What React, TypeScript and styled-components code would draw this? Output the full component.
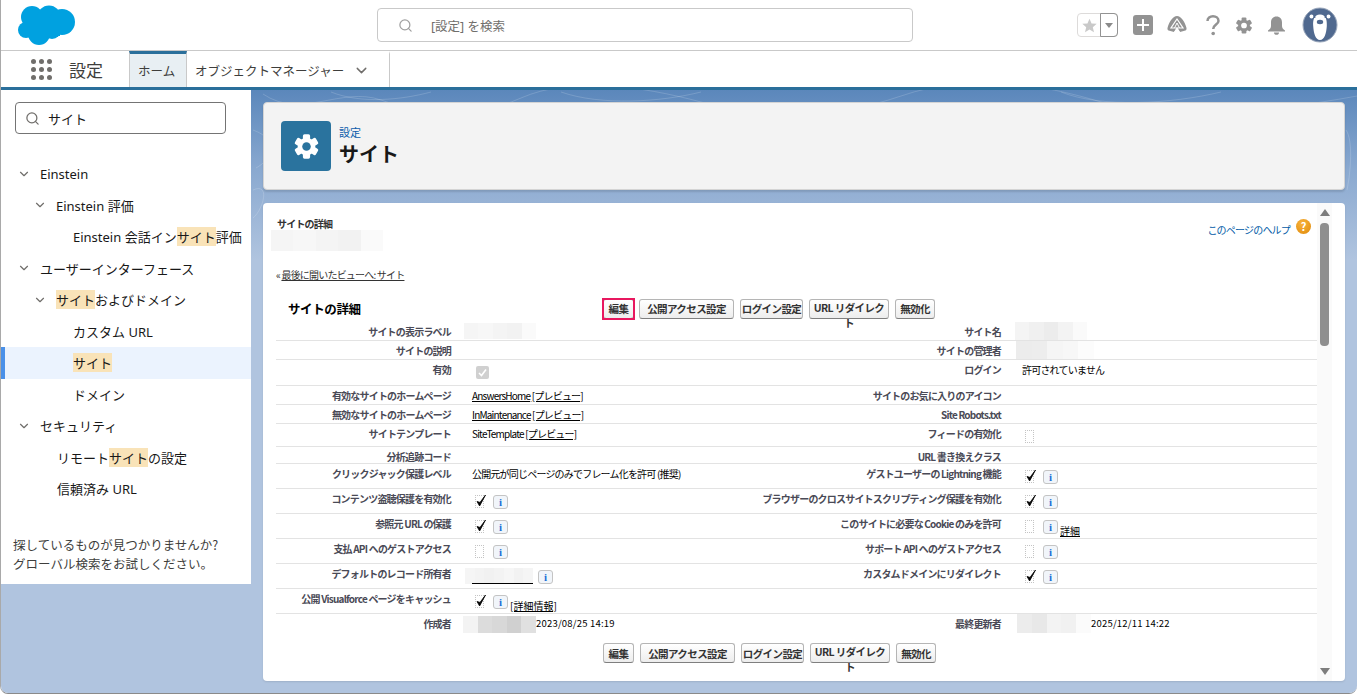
import React from 'react';
import styled, { createGlobalStyle } from 'styled-components';
import { ChevronDown, Search } from 'lucide-react';

const GlobalStyle = createGlobalStyle`
  html, body {
    margin: 0;
    padding: 0;
    background: #fff;
    overflow: hidden;
  }
  * {
    box-sizing: border-box;
  }
`;

const SANS = `"Noto Sans", "Noto Sans CJK JP", sans-serif`;
const CLASSIC = `"Noto Sans CJK JP", "Noto Sans", sans-serif`;

const Page = styled.div`
  width: 1357px;
  height: 694px;
  display: flex;
  flex-direction: column;
  border-left: 1px solid #a9a9a9;
  border-bottom: 1px solid #8a8a8a;
  border-bottom-left-radius: 8px;
  border-bottom-right-radius: 8px;
  overflow: hidden;
  font-family: ${SANS};
  color: #181818;
`;

const TopBar = styled.header`
  height: 51px;
  flex: none;
  position: relative;
  display: flex;
  align-items: center;
  background: #fff;
  border-bottom: 1px solid #c9c9c9;
`;

const Logo = styled.svg`
  position: absolute;
  left: 15px;
  top: 4px;
`;

const GlobalSearch = styled.div`
  position: absolute;
  left: 376px;
  top: 8px;
  width: 536px;
  height: 34px;
  display: flex;
  align-items: center;
  padding-left: 20px;
  gap: 18px;
  border: 1px solid #c9c9c9;
  border-radius: 4px;
  font-size: 12.5px;
  color: #706e6b;
`;

const TopIcons = styled.div`
  margin-left: auto;
  display: flex;
  align-items: center;
  padding-right: 19px;
`;

const Favorites = styled.div`
  width: 41px;
  height: 24px;
  display: flex;
  border: 1px solid #dddbda;
  border-radius: 4px;
  margin-right: 15px;
`;

const FavStar = styled.div`
  width: 22px;
  display: flex;
  align-items: center;
  justify-content: center;
  color: #c9c9c9;
`;

const FavDrop = styled.div`
  flex: 1;
  margin: -1px -1px -1px 0;
  display: flex;
  align-items: center;
  justify-content: center;
  border: 1px solid #939393;
  border-radius: 0 4px 4px 0;
`;

const Caret = styled.span`
  width: 0;
  height: 0;
  border-left: 4px solid transparent;
  border-right: 4px solid transparent;
  border-top: 5px solid #8a8a8a;
`;

const IconSlot = styled.div<{ $w: number; $ml?: number }>`
  width: ${p => p.$w}px;
  margin-left: ${p => p.$ml ?? 0}px;
  display: flex;
  align-items: center;
  justify-content: center;
`;

const NavBar = styled.nav`
  height: 39px;
  flex: none;
  display: flex;
  background: #fff;
  border-bottom: 3px solid #2a6f9b;
`;

const AppLauncher = styled.div`
  width: 128px;
  display: flex;
  align-items: center;
  padding-left: 30px;
  gap: 17px;
`;

const AppName = styled.div`
  font-family: ${CLASSIC};
  font-size: 17px;
  color: #3e3e3c;
`;

const DotsGrid = styled.div`
  display: grid;
  grid-template-columns: repeat(3, 5px);
  grid-auto-rows: 5px;
  gap: 3px;
  span {
    border-radius: 50%;
    background: #706e6b;
  }
`;

const Tab = styled.div<{ $active?: boolean }>`
  display: flex;
  align-items: center;
  gap: 9px;
  padding: 0 ${p => (p.$active ? 8 : 16)}px 0 8px;
  font-family: ${CLASSIC};
  font-size: 12.5px;
  color: #3e3e3c;
  border-right: 1px solid #c9c9c9;
  border-left: ${p => (p.$active ? '1px solid #c9c9c9' : 'none')};
  border-top: 3px solid ${p => (p.$active ? '#2a6f9b' : 'transparent')};
  background: ${p => (p.$active ? '#e8eff3' : '#fff')};
  width: ${p => (p.$active ? 58 : 203)}px;
  white-space: nowrap;
`;

const Body = styled.div`
  flex: 1;
  min-height: 0;
  position: relative;
  display: flex;
  align-items: flex-start;
  gap: 12px;
  background: linear-gradient(to bottom, #5b87bb 0, #8aa9d0 80px, #b0c4df 170px, #b0c4df 100%);
`;

const Contours = styled.svg`
  position: absolute;
  left: 0;
  top: 0;
  pointer-events: none;
`;

const Sidebar = styled.aside`
  width: 250px;
  height: 494px;
  flex: none;
  position: relative;
  background: #fff;
  display: flex;
  flex-direction: column;
`;

const QuickFind = styled.div`
  margin: 12px 0 0 14px;
  width: 211px;
  height: 32px;
  display: flex;
  align-items: center;
  gap: 8px;
  padding-left: 9px;
  border: 1px solid #747474;
  border-radius: 4px;
  font-family: ${CLASSIC};
  font-size: 13px;
  color: #181818;
`;

const Tree = styled.div`
  margin-top: 24px;
  display: flex;
  flex-direction: column;
`;

const TreeRow = styled.div<{ $indent: number; $selected?: boolean }>`
  height: 31.5px;
  display: flex;
  align-items: center;
  padding-left: ${p => p.$indent}px;
  font-size: 13px;
  color: #181818;
  white-space: nowrap;
  background: ${p => (p.$selected ? '#ebf3fe' : 'transparent')};
  box-shadow: ${p => (p.$selected ? 'inset 4px 0 0 #4a90e8' : 'none')};
  svg {
    margin-right: 9px;
    margin-left: -1px;
    color: #706e6b;
    flex: none;
  }
`;

const Mark = styled.mark`
  background: #f9e3b8;
  color: inherit;
`;

const SideHint = styled.div`
  margin-top: 30px;
  padding-left: 12px;
  font-family: ${CLASSIC};
  font-size: 12.5px;
  line-height: 19px;
  color: #3e3e3c;
`;

const Main = styled.main`
  width: 1082px;
  position: relative;
  display: flex;
  flex-direction: column;
  gap: 13px;
  padding-top: 12px;
`;

const PageHeader = styled.section`
  height: 88px;
  display: flex;
  align-items: center;
  gap: 8px;
  padding-left: 17px;
  background: #f3f3f3;
  border: 1px solid #d4d4d4;
  border-radius: 4px;
  box-shadow: 0 2px 2px rgba(0, 0, 0, 0.12);
`;

const HeaderIcon = styled.div`
  width: 50px;
  height: 50px;
  display: flex;
  align-items: center;
  justify-content: center;
  background: #2a739e;
  border-radius: 4px;
`;

const HeaderText = styled.div`
  font-family: ${CLASSIC};
  display: flex;
  flex-direction: column;
`;

const Crumb = styled.div`
  font-size: 11px;
  line-height: 15px;
  color: #0b5cab;
`;

const HeaderTitle = styled.h1`
  margin: 0;
  font-size: 20px;
  line-height: 28px;
  font-weight: 700;
  color: #181818;
`;

const Card = styled.section`
  height: 478px;
  display: flex;
  background: #fff;
  border-radius: 4px;
  padding-right: 13px;
  box-shadow: 0 1px 2px rgba(0, 0, 0, 0.1);
`;

const Classic = styled.div`
  flex: 1;
  min-width: 0;
  display: flex;
  flex-direction: column;
  padding: 0 0 0 13px;
  font-family: ${CLASSIC};
  font-size: 10px;
  letter-spacing: -0.8px;
  color: #000;
`;

const ScrollTrack = styled.div`
  width: 15px;
  display: flex;
  flex-direction: column;
  align-items: center;
  background: #fafafa;
  padding: 6px 0;
`;

const Thumb = styled.div`
  width: 9px;
  height: 123px;
  margin-top: 7px;
  background: #8f8f8f;
  border-radius: 4px;
`;

const ScrollArrow = styled.span<{ $down?: boolean }>`
  width: 0;
  height: 0;
  border-left: 5px solid transparent;
  border-right: 5px solid transparent;
  ${p => (p.$down ? 'border-top: 7px solid #7d7d7d; margin-top: auto;' : 'border-bottom: 7px solid #7d7d7d;')}
`;

const PageTop = styled.div`
  height: 60px;
  display: flex;
  justify-content: space-between;
  padding-top: 15px;
`;

const PageTopLeft = styled.div`
  padding-left: 1px;
`;

const SmallHeading = styled.div`
  font-weight: 700;
  font-size: 10px;
  line-height: 12px;
  color: #333;
`;

const HelpLink = styled.div`
  display: flex;
  align-items: flex-start;
  gap: 6px;
  margin-right: 6px;
  color: #015ba7;
  line-height: 24px;
  height: 24px;
  margin-top: 0;
`;

const HelpDot = styled.span`
  width: 15px;
  height: 15px;
  margin-top: 1px;
  border-radius: 50%;
  background: radial-gradient(circle at 40% 30%, #f7b23b, #e08a0b);
  color: #fff;
  font-size: 11px;
  font-weight: 700;
  line-height: 15px;
  text-align: center;
  letter-spacing: 0;
`;

const BackLink = styled.div`
  height: 12px;
  line-height: 12px;
  color: #333;
  margin-top: 6px;
  a {
    color: #333;
    text-decoration: underline;
  }
`;

const BlockHeader = styled.div`
  display: flex;
  align-items: center;
  margin-top: 14px;
  height: 27px;
`;

const BlockTitle = styled.h2`
  width: 327px;
  margin: 0;
  padding-left: 12px;
  font-size: 12.5px;
  letter-spacing: -0.4px;
  font-weight: 700;
  color: #000;
`;

const ButtonRow = styled.div`
  display: flex;
  align-items: center;
  gap: 6px;
`;

const Highlight = styled.div`
  display: flex;
  outline: 2px solid #e8185f;
  outline-offset: -1px;
  margin-right: -1px;
`;

const ClassicButton = styled.button<{ $w: number }>`
  width: ${p => p.$w}px;
  height: 20px;
  padding: 0;
  font-family: ${CLASSIC};
  font-size: 10.5px;
  letter-spacing: -0.6px;
  font-weight: 700;
  color: #333;
  border: 1px solid #b5b5b5;
  border-bottom-color: #7f7f7f;
  border-radius: 3px;
  background: linear-gradient(to bottom, #fff, #ededed);
`;

const BottomButtons = styled(ButtonRow)`
  margin: 8px 0 0 327px;
`;

const Row = styled.div<{ $h: number; $last?: boolean }>`
  height: ${p => p.$h}px;
  display: grid;
  grid-template-columns: 175px 309px 241px 316px;
  border-bottom: ${p => (p.$last ? 'none' : '1px solid #e3e3e3')};
`;

const Label = styled.div`
  padding-top: 3px;
  line-height: 13px;
  text-align: right;
  font-weight: 700;
  color: #4a4a56;
  white-space: nowrap;
`;

const Value = styled.div`
  padding: 3px 0 0 21px;
  line-height: 13px;
  display: flex;
  align-items: flex-start;
  white-space: nowrap;
  a {
    color: #000;
    text-decoration: underline;
  }
`;

const CheckBox = styled.span`
  width: 9px;
  height: 13px;
  margin: 3px 0 0 3px;
  flex: none;
  position: relative;
  border: 1px dotted #c4c4c4;
  svg {
    position: absolute;
    left: -2px;
    top: -3px;
  }
`;

const DisabledCheck = styled.span`
  width: 13px;
  height: 13px;
  margin: 3px 0 0 4px;
  display: flex;
  align-items: center;
  justify-content: center;
  background: #d0d0d0;
  border-radius: 2px;
`;

const InfoButton = styled.span<{ $ml?: number }>`
  width: 15px;
  height: 14px;
  margin-left: ${p => p.$ml ?? 9}px;
  margin-top: 3px;
  flex: none;
  display: flex;
  align-items: center;
  justify-content: center;
  font-family: "Liberation Serif", serif;
  font-size: 11px;
  font-weight: 700;
  letter-spacing: 0;
  color: #1a6fd6;
  background: #f1f5fa;
  border: 1px solid #c4c4c4;
  border-radius: 3px;
`;

const AfterInfo = styled.a`
  margin: 7px 0 0 2px;
  font-size: 10px;
  letter-spacing: 0;
`;

const Mosaic = styled.div<{ $w: number; $h: number; $ml?: number; $mt?: number }>`
  width: ${p => p.$w}px;
  height: ${p => p.$h}px;
  margin-left: ${p => p.$ml ?? 0}px;
  margin-top: ${p => p.$mt ?? 0}px;
  flex: none;
  display: flex;
  overflow: hidden;
  position: relative;
`;

const MosaicCell = styled.span<{ $shade: string }>`
  flex: 1;
  background: ${p => p.$shade};
`;

const OwnerLine = styled.span`
  position: absolute;
  left: 7px;
  right: 0;
  bottom: 0;
  height: 1px;
  background: #000;
`;

const Stamp = styled.span`
  letter-spacing: 0.2px;
  font-size: 9.5px;
`;

const Gear = ({ size, color, hole }: { size: number; color: string; hole: string }) => (
  <svg width={size} height={size} viewBox="0 0 24 24">
    {[0, 60, 120, 180, 240, 300].map(a => (
      <rect key={a} x="8.8" y="1.2" width="6.4" height="6" rx="1.4" fill={color} transform={`rotate(${a} 12 12)`} />
    ))}
    <circle cx="12" cy="12" r="7.8" fill={color} />
    <circle cx="12" cy="12" r="3.8" fill={hole} />
  </svg>
);

const Check = () => (
  <svg width="14" height="15" viewBox="0 0 14 15">
    <path d="M3 8.5 L5.6 13 L11.5 2 L6 9.4 Z" fill="#000" stroke="#000" strokeWidth="0.8" strokeLinejoin="round" />
  </svg>
);

const Cloud = () => (
  <Logo width="61" height="42" viewBox="0 0 61 42">
    <g fill="#00a1e0">
      <circle cx="16" cy="13" r="11" />
      <circle cx="33" cy="13" r="11.5" />
      <circle cx="46" cy="18" r="13" />
      <circle cx="10" cy="26" r="8" />
      <circle cx="23" cy="30" r="11" />
      <circle cx="36" cy="26" r="9" />
      <rect x="10" y="14" width="34" height="18" />
    </g>
  </Logo>
);

const Bear = () => (
  <svg width="36" height="36" viewBox="0 0 36 36">
    <circle cx="18" cy="18" r="17" fill="#50698f" stroke="#9aa7bb" strokeWidth="1" />
    <circle cx="9.5" cy="9.5" r="2" fill="#fff" />
    <circle cx="26.5" cy="9.5" r="2" fill="#fff" />
    <path d="M18 7.5 C12 7.5 10.8 13 11.2 19 C11.6 26 13.5 33 18 33 C22.5 33 24.4 26 24.8 19 C25.2 13 24 7.5 18 7.5 Z" fill="#fff" />
    <ellipse cx="18" cy="15" rx="3.2" ry="2.2" fill="#50698f" />
    <circle cx="12.5" cy="10" r="1.1" fill="#50698f" />
    <circle cx="23.5" cy="10" r="1.1" fill="#50698f" />
  </svg>
);

const M1 = ['#f5f5f5', '#f7f7f7', '#f4f4f4', '#f2f2f2', '#fafafa'];
const M2 = ['#f4f4f4', '#f0f0f0', '#ececec', '#f3f3f3', '#fafafa'];
const M3 = ['#ececec', '#ededed', '#f5f5f5', '#f7f7f7', '#fcfcfc'];
const M4 = ['#f3f3f3', '#dcdcdc', '#d8d8d8', '#d0d0d0', '#e0e0e0'];
const M5 = ['#ececec', '#e8e8e8', '#f3f3f3', '#f1f1f1', '#fbfbfb'];
const M6 = ['#e6e6e6', '#f0f0f0', '#f5f5f5', '#f3f3f3'];
const M7 = ['#f5f5f5', '#f3f3f3', '#f1f1f1', '#f3f3f3', '#f6f6f6', '#f2f2f2', '#f5f5f5'];

const Blur = ({ shades, w, h, ml, mt, line }: { shades: string[]; w: number; h: number; ml?: number; mt?: number; line?: boolean }) => (
  <Mosaic $w={w} $h={h} $ml={ml} $mt={mt}>
    {shades.map((s, i) => (
      <MosaicCell key={i} $shade={s} />
    ))}
    {line && <OwnerLine />}
  </Mosaic>
);

const Checked = () => (
  <CheckBox>
    <Check />
  </CheckBox>
);

const Info = ({ ml }: { ml?: number }) => <InfoButton $ml={ml}>i</InfoButton>;

const Preview = ({ name, plain }: { name: string; plain?: boolean }) => (
  <span>
    <a>{name}</a> <a>[プレビュー]</a>
  </span>
);

type RowDef = { h: number; l1: string; v1?: React.ReactNode; l2?: string; v2?: React.ReactNode };

const rows: RowDef[] = [
  { h: 19, l1: 'サイトの表示ラベル', v1: <Blur shades={M1} w={72} h={16} ml={-8} mt={-2} />, l2: 'サイト名', v2: <Blur shades={M2} w={72} h={18} ml={-7} mt={-3} /> },
  { h: 19, l1: 'サイトの説明', l2: 'サイトの管理者', v2: <Blur shades={M3} w={78} h={18} ml={-6} mt={-3} /> },
  { h: 26, l1: '有効', v1: <DisabledCheck><svg width="9" height="9" viewBox="0 0 9 9"><path d="M1 5 L3.5 7.5 L8 1.5" stroke="#fff" strokeWidth="1.6" fill="none" /></svg></DisabledCheck>, l2: 'ログイン', v2: '許可されていません' },
  { h: 19, l1: '有効なサイトのホームページ', v1: <Preview name="AnswersHome" />, l2: 'サイトのお気に入りのアイコン' },
  { h: 19, l1: '無効なサイトのホームページ', v1: <Preview name="InMaintenance" />, l2: 'Site Robots.txt' },
  { h: 23, l1: 'サイトテンプレート', v1: <span>SiteTemplate <a>[プレビュー]</a></span>, l2: 'フィードの有効化', v2: <CheckBox /> },
  { h: 17, l1: '分析追跡コード', l2: 'URL 書き換えクラス' },
  { h: 25, l1: 'クリックジャック保護レベル', v1: '公開元が同じページのみでフレーム化を許可 (推奨)', l2: 'ゲストユーザーの Lightning 機能', v2: <><Checked /><Info /></> },
  { h: 25, l1: 'コンテンツ盗聴保護を有効化', v1: <><Checked /><Info /></>, l2: 'ブラウザーのクロスサイトスクリプティング保護を有効化', v2: <><Checked /><Info /></> },
  { h: 25, l1: '参照元 URL の保護', v1: <><Checked /><Info /></>, l2: 'このサイトに必要な Cookie のみを許可', v2: <><CheckBox /><Info /><AfterInfo>詳細</AfterInfo></> },
  { h: 25, l1: '支払 API へのゲストアクセス', v1: <><CheckBox /><Info /></>, l2: 'サポート API へのゲストアクセス', v2: <><CheckBox /><Info /></> },
  { h: 25, l1: 'デフォルトのレコード所有者', v1: <><Blur shades={M7} w={68} h={16} ml={-7} mt={1} line /><Info ml={5} /></>, l2: 'カスタムドメインにリダイレクト', v2: <><Checked /><Info /></> },
  { h: 25, l1: '公開 Visualforce ページをキャッシュ', v1: <><Checked /><Info /><AfterInfo>[詳細情報]</AfterInfo></> },
  { h: 21, l1: '作成者', v1: <><Blur shades={M4} w={73} h={17} ml={-9} mt={-1} /><Stamp>2023/08/25 14:19</Stamp></>, l2: '最終更新者', v2: <><Blur shades={M5} w={74} h={19} ml={-5} mt={-3} /><Stamp>2025/12/11 14:22</Stamp></> },
];

const buttons: [string, number][] = [
  ['公開アクセス設定', 95],
  ['ログイン設定', 63],
  ['URL リダイレクト', 80],
  ['無効化', 40],
];

export default function App() {
  return (
    <Page>
      <GlobalStyle />
      <TopBar>
        <Cloud />
        <GlobalSearch>
          <Search size={15} color="#a0a0a0" />
          <span>[設定] を検索</span>
        </GlobalSearch>
        <TopIcons>
          <Favorites>
            <FavStar>
              <svg width="15" height="15" viewBox="0 0 24 24"><path d="M12 1 L15.3 8.6 L23.5 9.3 L17.3 14.7 L19.2 22.8 L12 18.5 L4.8 22.8 L6.7 14.7 L0.5 9.3 L8.7 8.6 Z" fill="currentColor" /></svg>
            </FavStar>
            <FavDrop><Caret /></FavDrop>
          </Favorites>
          <IconSlot $w={20}>
            <svg width="20" height="20" viewBox="0 0 20 20">
              <rect width="20" height="20" rx="3" fill="#939393" />
              <path d="M10 4 V16 M4 10 H16" stroke="#fff" strokeWidth="2" />
            </svg>
          </IconSlot>
          <IconSlot $w={20} $ml={14}>
            <svg width="20" height="20" viewBox="0 0 20 20">
              <path d="M10 1 C14 1 18 7 19.5 13 C19.8 14.6 19 15.5 17.5 15.8 L13 17 L10 12 L7 17 L2.5 15.8 C1 15.5 0.2 14.6 0.5 13 C2 7 6 1 10 1 Z" fill="#939393" />
              <path d="M10 4 L4 13 H16 Z M7 18 L10 14 L13 18" fill="none" stroke="#fff" strokeWidth="1.2" />
              <path d="M10 8 L7.5 13 M10 8 L12.5 13" stroke="#fff" strokeWidth="1" />
            </svg>
          </IconSlot>
          <IconSlot $w={14} $ml={19}>
            <svg width="14" height="21" viewBox="0 0 14 21">
              <path d="M1.5 6 C1.5 3 4 1.3 7 1.3 C10 1.3 12.5 3 12.5 6 C12.5 9.5 7.2 9.8 7.2 14" fill="none" stroke="#939393" strokeWidth="2.5" />
              <circle cx="7.2" cy="18.5" r="1.8" fill="#939393" />
            </svg>
          </IconSlot>
          <IconSlot $w={18} $ml={15}>
            <Gear size={19} color="#939393" hole="#fff" />
          </IconSlot>
          <IconSlot $w={19} $ml={14}>
            <svg width="19" height="19" viewBox="0 0 19 19">
              <path d="M9.5 0.5 C13 0.5 15 3 15 6.5 V10 C15 12 16 13 18 14.5 V15.5 H1 V14.5 C3 13 4 12 4 10 V6.5 C4 3 6 0.5 9.5 0.5 Z" fill="#939393" />
              <path d="M7 16.5 H12 C12 18 11 18.8 9.5 18.8 C8 18.8 7 18 7 16.5 Z" fill="#939393" />
            </svg>
          </IconSlot>
          <IconSlot $w={36} $ml={16}>
            <Bear />
          </IconSlot>
        </TopIcons>
      </TopBar>

      <NavBar>
        <AppLauncher>
          <DotsGrid>
            {Array.from({ length: 9 }).map((_, i) => <span key={i} />)}
          </DotsGrid>
          <AppName>設定</AppName>
        </AppLauncher>
        <Tab $active>ホーム</Tab>
        <Tab>
          オブジェクトマネージャー
          <ChevronDown size={17} color="#706e6b" />
        </Tab>
      </NavBar>

      <Body>
        <Contours width="1356" height="140" viewBox="0 0 1356 140" fill="none" stroke="#ffffff" strokeOpacity="0.16">
          <path d="M262 4 C300 30 340 -4 380 10 S470 30 520 8 S640 -4 700 12 S830 30 900 6 S1040 -6 1100 12 S1260 24 1356 6" />
          <path d="M252 40 C280 50 270 70 255 78 M252 100 C270 92 262 120 252 128" />
          <path d="M330 2 C360 14 400 10 430 2 M560 2 C600 16 660 12 700 2 M1060 2 C1100 18 1170 14 1220 2" />
          <path d="M1345 40 C1352 50 1350 80 1346 100" />
        </Contours>
        <Sidebar>
          <QuickFind>
            <Search size={15} color="#706e6b" />
            サイト
          </QuickFind>
          <Tree>
            <TreeRow $indent={17}><ChevronDown size={14} />Einstein</TreeRow>
            <TreeRow $indent={33}><ChevronDown size={14} />Einstein 評価</TreeRow>
            <TreeRow $indent={72}>Einstein 会話イン<Mark>サイト</Mark>評価</TreeRow>
            <TreeRow $indent={17}><ChevronDown size={14} />ユーザーインターフェース</TreeRow>
            <TreeRow $indent={33}><ChevronDown size={14} /><Mark>サイト</Mark>およびドメイン</TreeRow>
            <TreeRow $indent={72}>カスタム URL</TreeRow>
            <TreeRow $indent={72} $selected><Mark>サイト</Mark></TreeRow>
            <TreeRow $indent={72}>ドメイン</TreeRow>
            <TreeRow $indent={17}><ChevronDown size={14} />セキュリティ</TreeRow>
            <TreeRow $indent={56}>リモート<Mark>サイト</Mark>の設定</TreeRow>
            <TreeRow $indent={56}>信頼済み URL</TreeRow>
          </Tree>
          <SideHint>
            探しているものが見つかりませんか?<br />
            グローバル検索をお試しください。
          </SideHint>
        </Sidebar>

        <Main>
          <PageHeader>
            <HeaderIcon>
              <Gear size={27} color="#fff" hole="#2a739e" />
            </HeaderIcon>
            <HeaderText>
              <Crumb>設定</Crumb>
              <HeaderTitle>サイト</HeaderTitle>
            </HeaderText>
          </PageHeader>

          <Card>
            <Classic>
              <PageTop>
                <PageTopLeft>
                  <SmallHeading>サイトの詳細</SmallHeading>
                  <Blur shades={M1} w={112} h={21} ml={-6} />
                </PageTopLeft>
                <HelpLink>
                  <span>このページのヘルプ</span>
                  <HelpDot>?</HelpDot>
                </HelpLink>
              </PageTop>
              <BackLink>« <a>最後に開いたビューへ: サイト</a></BackLink>
              <BlockHeader>
                <BlockTitle>サイトの詳細</BlockTitle>
                <ButtonRow>
                  <Highlight><ClassicButton $w={31}>編集</ClassicButton></Highlight>
                  {buttons.map(([t, w]) => (
                    <ClassicButton key={t} $w={w}>{t}</ClassicButton>
                  ))}
                </ButtonRow>
              </BlockHeader>
              {rows.map((r, i) => (
                <Row key={r.l1} $h={r.h} $last={i === rows.length - 1}>
                  <Label>{r.l1}</Label>
                  <Value>{r.v1}</Value>
                  <Label>{r.l2}</Label>
                  <Value>{r.v2}</Value>
                </Row>
              ))}
              <BottomButtons>
                <ClassicButton $w={31}>編集</ClassicButton>
                {buttons.map(([t, w]) => (
                  <ClassicButton key={t} $w={w}>{t}</ClassicButton>
                ))}
              </BottomButtons>
            </Classic>
            <ScrollTrack>
              <ScrollArrow />
              <Thumb />
              <ScrollArrow $down />
            </ScrollTrack>
          </Card>
        </Main>
      </Body>
    </Page>
  );
}
